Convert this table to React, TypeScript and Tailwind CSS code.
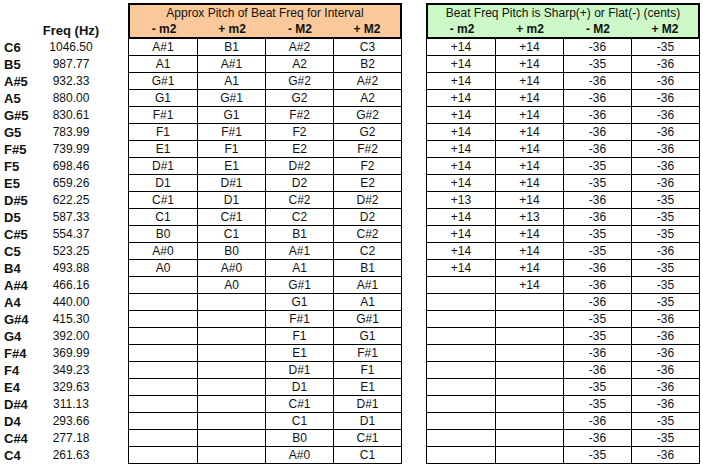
type Row = [string, string, string[], string[]];

const rows: Row[] = [
  ["C6", "1046.50", ["A#1", "B1", "A#2", "C3"], ["+14", "+14", "-36", "-35"]],
  ["B5", "987.77", ["A1", "A#1", "A2", "B2"], ["+14", "+14", "-35", "-36"]],
  ["A#5", "932.33", ["G#1", "A1", "G#2", "A#2"], ["+14", "+14", "-36", "-36"]],
  ["A5", "880.00", ["G1", "G#1", "G2", "A2"], ["+14", "+14", "-36", "-36"]],
  ["G#5", "830.61", ["F#1", "G1", "F#2", "G#2"], ["+14", "+14", "-36", "-36"]],
  ["G5", "783.99", ["F1", "F#1", "F2", "G2"], ["+14", "+14", "-36", "-36"]],
  ["F#5", "739.99", ["E1", "F1", "E2", "F#2"], ["+14", "+14", "-36", "-36"]],
  ["F5", "698.46", ["D#1", "E1", "D#2", "F2"], ["+14", "+14", "-35", "-36"]],
  ["E5", "659.26", ["D1", "D#1", "D2", "E2"], ["+14", "+14", "-35", "-36"]],
  ["D#5", "622.25", ["C#1", "D1", "C#2", "D#2"], ["+13", "+14", "-36", "-35"]],
  ["D5", "587.33", ["C1", "C#1", "C2", "D2"], ["+14", "+13", "-36", "-35"]],
  ["C#5", "554.37", ["B0", "C1", "B1", "C#2"], ["+14", "+14", "-35", "-35"]],
  ["C5", "523.25", ["A#0", "B0", "A#1", "C2"], ["+14", "+14", "-35", "-36"]],
  ["B4", "493.88", ["A0", "A#0", "A1", "B1"], ["+14", "+14", "-36", "-35"]],
  ["A#4", "466.16", ["", "A0", "G#1", "A#1"], ["", "+14", "-36", "-35"]],
  ["A4", "440.00", ["", "", "G1", "A1"], ["", "", "-36", "-35"]],
  ["G#4", "415.30", ["", "", "F#1", "G#1"], ["", "", "-35", "-36"]],
  ["G4", "392.00", ["", "", "F1", "G1"], ["", "", "-35", "-36"]],
  ["F#4", "369.99", ["", "", "E1", "F#1"], ["", "", "-36", "-36"]],
  ["F4", "349.23", ["", "", "D#1", "F1"], ["", "", "-36", "-36"]],
  ["E4", "329.63", ["", "", "D1", "E1"], ["", "", "-35", "-36"]],
  ["D#4", "311.13", ["", "", "C#1", "D#1"], ["", "", "-35", "-36"]],
  ["D4", "293.66", ["", "", "C1", "D1"], ["", "", "-36", "-35"]],
  ["C#4", "277.18", ["", "", "B0", "C#1"], ["", "", "-36", "-35"]],
  ["C4", "261.63", ["", "", "A#0", "C1"], ["", "", "-35", "-36"]],
];

const subs = ["- m2", "+ m2", "- M2", "+ M2"];

function Block({ title, bg, cells }: { title: string; bg: string; cells: string[][] }) {
  return (
    <div className="w-[274px]">
      <div className={`h-[36px] border-2 border-black ${bg} flex flex-col`}>
        <div className="h-[16px] leading-[16px] text-center">{title}</div>
        <div className="grid grid-cols-[68px_68px_68px_66px] font-bold leading-[16px]">
          {subs.map((s) => (
            <div key={s} className="text-center">{s}</div>
          ))}
        </div>
      </div>
      <div className="border-l border-black">
        {cells.map((r, i) => (
          <div key={i} className="grid grid-cols-[69px_68px_68px_68px] h-[17px]">
            {r.map((c, j) => (
              <div key={j} className="border-r border-b border-black text-center leading-[16px]">
                {c}
              </div>
            ))}
          </div>
        ))}
      </div>
    </div>
  );
}

export default function App() {
  return (
    <div
      className="w-[703px] h-[468px] bg-white text-[12px] text-[#111] flex pt-[3px]"
      style={{ fontFamily: '"Liberation Sans", Arial, sans-serif' }}
    >
      <div className="w-[128px]">
        <div className="h-[36px] flex items-end">
          <div className="w-[42px]" />
          <div className="w-[58px] text-center font-bold leading-[16px] text-[13px]">Freq (Hz)</div>
        </div>
        {rows.map((r) => (
          <div key={r[0]} className="flex h-[17px] leading-[17px]">
            <div className="w-[42px] pl-[4px] font-bold text-[13px]">{r[0]}</div>
            <div className="w-[58px] text-center">{r[1]}</div>
          </div>
        ))}
      </div>
      <Block title="Approx Pitch of Beat Freq for Interval" bg="bg-[#fac99b]" cells={rows.map((r) => r[2])} />
      <div className="w-[24px]" />
      <Block
        title="Beat Freq Pitch is Sharp(+) or Flat(-) (cents)"
        bg="bg-[#ccf8c8]"
        cells={rows.map((r) => r[3])}
      />
    </div>
  );
}
